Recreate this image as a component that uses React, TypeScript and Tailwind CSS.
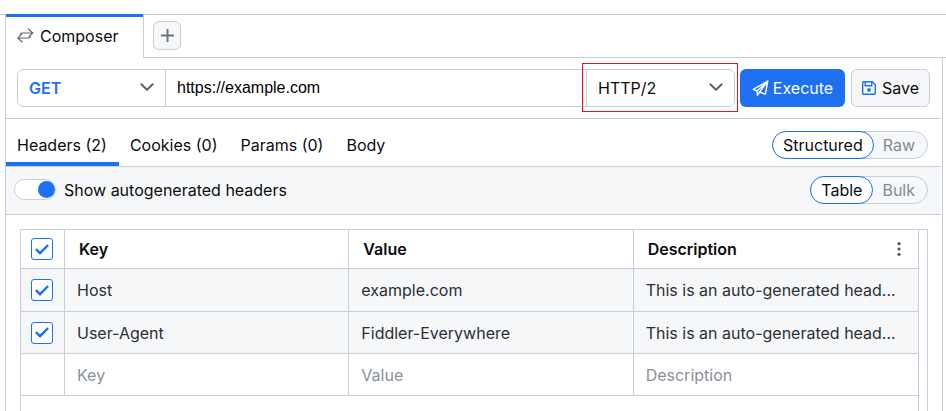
import { useState } from "react";
import type { ReactNode } from "react";
import clsx from "clsx";

interface HeaderRow {
  name: string;
  value: string;
  description: string;
}

const HEADER_ROWS: HeaderRow[] = [
  { name: "Host", value: "example.com", description: "This is an auto-generated head..." },
  { name: "User-Agent", value: "Fiddler-Everywhere", description: "This is an auto-generated head..." },
];

const REQUEST_TABS = ["Headers (2)", "Cookies (0)", "Params (0)", "Body"];

export default function App() {
  const [activeTab, setActiveTab] = useState(REQUEST_TABS[0]);

  return (
    <div className="flex min-h-screen flex-col bg-white pt-3.5 font-['Inter','Liberation_Sans',sans-serif] text-base leading-6 text-[#0b0c0f]">
      {/* Document tabs */}
      <div className="flex h-11">
        <div className="w-[5px] border-t border-[#c8cddc]" />
        <div className="flex w-[139px] flex-col border-x border-[#c8cddc]">
          <div className="h-[3px] bg-[#1e70f2]" />
          <button type="button" className="flex flex-1 items-center gap-1.5 pb-1 pl-[11px]">
            <ExchangeIcon />
            Composer
          </button>
        </div>
        <div className="flex-1 border-y border-[#c8cddc] pt-1.5 pl-[9px]">
          <button
            type="button"
            aria-label="New tab"
            className="flex h-[29px] w-7 items-center justify-center rounded-md border border-[#c8cddc] bg-[#f5f7f9] text-[#6d7480]"
          >
            <PlusIcon />
          </button>
        </div>
      </div>

      <main className="mr-[3px] ml-[5px] flex flex-1 flex-col border-x border-[#c8cddc] pr-px">
        {/* Request line */}
        <form className="flex border-b border-[#c8cddc] px-[11px] py-[11px]">
          <Select label="Method" options={["GET", "POST", "PUT", "DELETE"]} className="rounded-l-md font-semibold text-[#1e70f2]" />
          <input
            type="text"
            aria-label="URL"
            defaultValue="https://example.com"
            className="h-[38px] min-w-0 flex-1 border-y border-[#c8cddc] px-[11px] font-['Liberation_Sans',sans-serif] text-base text-black outline-none"
          />
          <div className="relative">
            <Select label="Protocol" options={["HTTP/2", "HTTP/1.1"]} className="rounded-r-md" />
            <div className="pointer-events-none absolute -top-1.5 -right-[3px] -bottom-[5px] -left-1 border border-[#e81123]" />
          </div>
          <button type="button" className="ml-[5px] flex h-[38px] w-[105px] items-center justify-center gap-1 rounded-md bg-[#1e70f2] text-white">
            <SendIcon />
            Execute
          </button>
          <button type="button" className="ml-1.5 flex h-[38px] w-[79px] items-center justify-center gap-1.5 rounded-md border border-[#c8cddc] bg-[#f5f7f9]">
            <SaveIcon />
            Save
          </button>
        </form>

        {/* Request tabs */}
        <div className="flex h-12 items-center border-b border-[#c8cddc] pr-[13px]">
          <nav className="flex h-full flex-1">
            {REQUEST_TABS.map((tab) => (
              <button
                key={tab}
                type="button"
                onClick={() => setActiveTab(tab)}
                className={clsx(
                  "border-b-4 px-[11px] pt-2",
                  tab === activeTab ? "border-[#1e70f2] pr-3" : "border-transparent pr-3",
                )}
              >
                {tab}
              </button>
            ))}
          </nav>
          <div className="pt-1">
            <Segmented name="layout" options={["Structured", "Raw"]} />
          </div>
        </div>

        {/* Header options */}
        <div className="flex h-12 items-center justify-between border-b border-[#c8cddc] bg-[#f5f7f9] pr-[13px] pb-0.5 pl-2">
          <label className="flex items-center gap-2">
            <span className="relative flex items-center">
              <input
                type="checkbox"
                role="switch"
                defaultChecked
                className="peer h-[21px] w-[42px] appearance-none rounded-full border border-[#c8cddc] bg-white"
              />
              <span className="pointer-events-none absolute left-0.5 size-[17px] rounded-full bg-[#8a909c] peer-checked:left-6 peer-checked:bg-[#1e70f2]" />
            </span>
            Show autogenerated headers
          </label>
          <Segmented name="view" options={["Table", "Bulk"]} />
        </div>

        {/* Headers grid */}
        <div className="mt-3.5 mr-[13px] ml-3.5 flex flex-1 flex-col border-x border-t border-[#c8cddc] pr-2">
          <div className="flex-1 border-r border-[#c8cddc]">
            <table className="w-full table-fixed border-separate border-spacing-0 text-left">
              <colgroup>
                <col className="w-11" />
                <col />
                <col />
                <col />
              </colgroup>
              <thead>
                <tr className="h-[39px]">
                  <Cell head><Tick label="Select all headers" /></Cell>
                  <Cell head>Key</Cell>
                  <Cell head>Value</Cell>
                  <Cell head>
                    <span className="flex items-center justify-between">
                      Description
                      <button type="button" aria-label="Columns menu" className="text-[#4f5663]">
                        <DotsIcon />
                      </button>
                    </span>
                  </Cell>
                </tr>
              </thead>
              <tbody className="text-[#2c2f36]">
                {HEADER_ROWS.map((row) => (
                  <tr key={row.name} className="h-[42px] bg-[#f5f7f9] first:h-[43px]">
                    <Cell><Tick label={`Send ${row.name}`} /></Cell>
                    <Cell>{row.name}</Cell>
                    <Cell>{row.value}</Cell>
                    <Cell>{row.description}</Cell>
                  </tr>
                ))}
                <tr className="h-[42px]">
                  <Cell />
                  {["Key", "Value", "Description"].map((field) => (
                    <Cell key={field}>
                      <input
                        type="text"
                        aria-label={`New ${field.toLowerCase()}`}
                        placeholder={field}
                        className="block h-6 w-full outline-none placeholder:text-[#8a909c]"
                      />
                    </Cell>
                  ))}
                </tr>
              </tbody>
            </table>
          </div>
        </div>
      </main>
    </div>
  );
}

function Cell({ head, children }: { head?: boolean; children?: ReactNode }) {
  const Tag = head ? "th" : "td";
  return (
    <Tag
      className={clsx(
        "truncate border-r border-b border-[#c8cddc] py-0 pr-3 first:px-2.5 last:border-r-0",
        head ? "pl-3.5 font-semibold" : "pl-3",
      )}
    >
      {children}
    </Tag>
  );
}

function Select({ label, options, className }: { label: string; options: string[]; className?: string }) {
  return (
    <div className="relative">
      <select
        aria-label={label}
        className={clsx("h-[38px] w-[149px] appearance-none border border-[#c8cddc] bg-white pl-[11px] outline-none", className)}
      >
        {options.map((option) => (
          <option key={option}>{option}</option>
        ))}
      </select>
      <svg width="14" height="8" viewBox="0 0 14 8" fill="none" stroke="#5d6470" strokeWidth="2" className="pointer-events-none absolute top-3.5 right-3">
        <path d="M.8.8 7 6.8 13.2.8" />
      </svg>
    </div>
  );
}

function Segmented({ name, options }: { name: string; options: string[] }) {
  return (
    <div className="flex h-7 rounded-full border border-[#c8cddc] bg-[#f5f7f9]">
      {options.map((option, i) => (
        <label
          key={option}
          className="-my-px flex items-center rounded-full border border-transparent pr-[11px] pl-2 text-[#858b96] first:-ml-px first:pr-2.5 first:pl-2.5 has-checked:border-[#1e70f2] has-checked:bg-white has-checked:text-[#0b0c0f]"
        >
          <input type="radio" name={name} defaultChecked={i === 0} className="sr-only" />
          {option}
        </label>
      ))}
    </div>
  );
}

function Tick({ label }: { label: string }) {
  return (
    <span className="grid size-[22px] place-items-center">
      <input
        type="checkbox"
        aria-label={label}
        defaultChecked
        className="peer col-start-1 row-start-1 size-[22px] appearance-none rounded-[3px] border border-[#1e70f2] bg-white"
      />
      <svg width="14" height="11" viewBox="0 0 14 11" fill="none" stroke="#1e70f2" strokeWidth="2.4" className="pointer-events-none invisible col-start-1 row-start-1 peer-checked:visible">
        <path d="M.9 5.2 5 9.2 13.1 1" />
      </svg>
    </span>
  );
}

function ExchangeIcon() {
  return (
    <svg width="17" height="15" viewBox="0 0 17 15" fill="none" stroke="#5d6470" strokeWidth="1.2">
      <path d="M11.2.8 15.8 5 11.6 9.2M15.4 5H4.6L3 6.2" />
      <path d="M5.4 14.2.8 10 5 5.8M1.2 10H12L13.6 8.8" />
    </svg>
  );
}

function PlusIcon() {
  return (
    <svg width="13" height="13" viewBox="0 0 13 13" fill="none" stroke="currentColor" strokeWidth="2">
      <path d="M6.5 0v13M0 6.5h13" />
    </svg>
  );
}

function SendIcon() {
  return (
    <svg width="17" height="17" viewBox="0 0 17 17" fill="none" stroke="currentColor" strokeWidth="1.4" strokeLinejoin="round">
      <path d="M15.8 1 1.2 9.4 5 11 15.8 1 13.4 14.2 7.6 12 5.4 15.4 5 11M7.6 12 15.8 1" />
    </svg>
  );
}

function SaveIcon() {
  return (
    <svg width="14" height="14" viewBox="0 0 14 14" fill="none" stroke="#1e70f2" strokeWidth="1.4">
      <path d="M.7 1.7a1 1 0 0 1 1-1h8.5l3.1 3.1v8.5a1 1 0 0 1-1 1H1.7a1 1 0 0 1-1-1z" />
      <path d="M3.2.9v3.9h6.6V.9" />
      <rect x="5.3" y="7.4" width="3.4" height="3.2" fill="#1e70f2" stroke="none" />
    </svg>
  );
}

function DotsIcon() {
  return (
    <svg width="14" height="14" viewBox="0 0 14 14" fill="currentColor">
      <circle cx="7" cy="1.7" r="1.6" />
      <circle cx="7" cy="7" r="1.6" />
      <circle cx="7" cy="12.3" r="1.6" />
    </svg>
  );
}
